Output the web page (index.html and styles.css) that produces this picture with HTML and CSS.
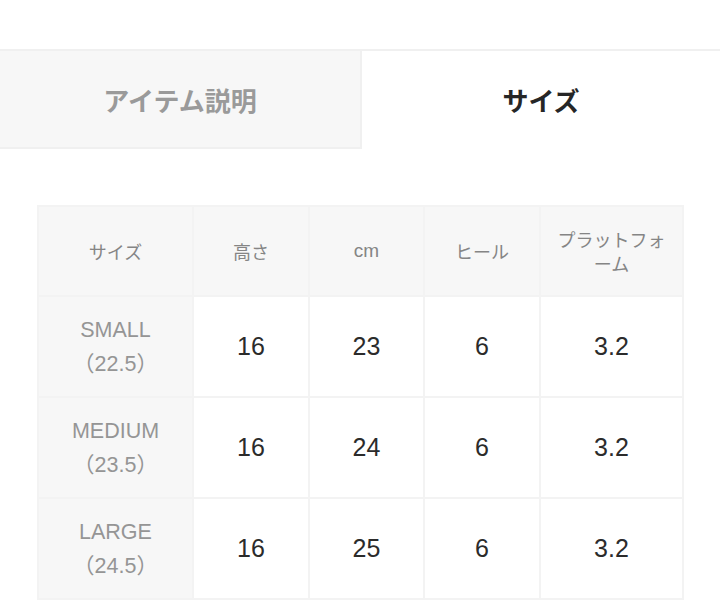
FILE: index.html
```html
<!DOCTYPE html>
<html lang="ja">
<head>
<meta charset="utf-8">
<link rel="stylesheet" href="styles.css">
</head>
<body>
<div class="page">
  <div class="tabs">
    <div class="tab tab-inactive">アイテム説明</div>
    <div class="tab tab-active">サイズ</div>
  </div>
  <table class="size-table">
    <colgroup>
      <col class="c1"><col class="c2"><col class="c3"><col class="c4"><col class="c5">
    </colgroup>
    <thead>
      <tr>
        <th>サイズ</th>
        <th>高さ</th>
        <th>cm</th>
        <th>ヒール</th>
        <th>プラットフォーム</th>
      </tr>
    </thead>
    <tbody>
      <tr>
        <th class="rowhead">SMALL<br>（22.5）</th>
        <td>16</td><td>23</td><td>6</td><td>3.2</td>
      </tr>
      <tr>
        <th class="rowhead">MEDIUM<br>（23.5）</th>
        <td>16</td><td>24</td><td>6</td><td>3.2</td>
      </tr>
      <tr>
        <th class="rowhead">LARGE<br>（24.5）</th>
        <td>16</td><td>25</td><td>6</td><td>3.2</td>
      </tr>
    </tbody>
  </table>
</div>
</body>
</html>
```

FILE: styles.css
```css
html, body {
  margin: 0;
  padding: 0;
  background: #ffffff;
}
body {
  font-family: "Liberation Sans", "Noto Sans CJK JP", sans-serif;
  color: #333333;
}
.page {
  width: 720px;
  height: 600px;
  overflow: hidden;
  padding-top: 49px;
  box-sizing: border-box;
}
.tabs {
  display: flex;
  border-top: 2px solid #f0f0f0;
}
.tab {
  height: 98px;
  display: flex;
  align-items: center;
  justify-content: center;
  font-family: "Noto Sans CJK JP", sans-serif;
  font-size: 26px;
  font-weight: 700;
}
.tab-inactive {
  width: 362px;
  background: #f7f7f7;
  color: #9a9a9a;
  border-right: 2px solid #f0f0f0;
  border-bottom: 2px solid #f0f0f0;
  box-sizing: border-box;
}
.tab-active {
  flex: 1;
  color: #262626;
  padding-bottom: 2px;
  box-sizing: border-box;
}
.size-table {
  margin: 56px 0 0 37px;
  width: 645px;
  border-collapse: collapse;
  table-layout: fixed;
}
.c1 { width: 155px; }
.c2 { width: 116px; }
.c3 { width: 115px; }
.c4 { width: 116px; }
.c5 { width: 143px; }
.size-table th,
.size-table td {
  border: 2px solid #f3f3f3;
  text-align: center;
  vertical-align: middle;
  padding: 0 12px;
}
.size-table thead th {
  height: 88px;
  background: #f7f7f7;
  color: #858585;
  font-family: "Noto Sans CJK JP", sans-serif;
  font-size: 18px;
  font-weight: 400;
  line-height: 24px;
}
.size-table thead th:nth-child(3) {
  font-family: "Liberation Sans", sans-serif;
  font-size: 19px;
}
.size-table tbody tr {
  height: 101px;
}
.size-table .rowhead {
  background: #f7f7f7;
  color: #959595;
  font-weight: 400;
  font-size: 21.5px;
  line-height: 34px;
}
.size-table td {
  background: #ffffff;
  color: #2b2b2b;
  font-size: 25px;
  font-weight: 400;
}
```
